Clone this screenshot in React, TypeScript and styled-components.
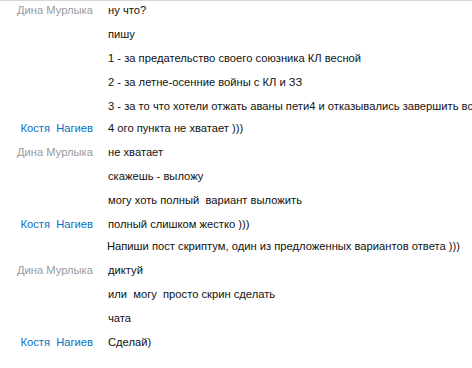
import styled, { createGlobalStyle } from 'styled-components'

type Msg = { from?: 'dina' | 'kostya'; text: string; tight?: boolean; nudge?: boolean }

const names = {
  dina: 'Дина Мурлыка',
  kostya: 'Костя\u00a0 Нагиев',
}

const messages: Msg[] = [
  { from: 'dina', text: 'ну что?' },
  { text: 'пишу' },
  { text: '1 - за предательство своего союзника КЛ весной' },
  { text: '2 - за летне-осенние войны с КЛ и ЗЗ' },
  { text: '3 - за то что хотели отжать аваны пети4 и отказывались завершить всё' },
  { from: 'kostya', text: '4 ого пункта не хватает )))', tight: true },
  { from: 'dina', text: 'не хватает' },
  { text: 'скажешь - выложу' },
  { text: 'могу хоть полный  вариант выложить' },
  { from: 'kostya', text: 'полный слишком жестко )))' },
  { text: 'Напиши пост скриптум, один из предложенных вариантов ответа )))', tight: true, nudge: true },
  { from: 'dina', text: 'диктуй' },
  { text: 'или  могу  просто скрин сделать' },
  { text: 'чата' },
  { from: 'kostya', text: 'Сделай)' },
]

export default function App() {
  return (
    <>
      <GlobalStyle />
      <Log>
        {messages.map((m, i) => (
          <Row key={i} $tight={m.tight}>
            <Author $who={m.from}>{m.from ? names[m.from] : ''}</Author>
            <Text $nudge={m.nudge}>{m.text}</Text>
          </Row>
        ))}
      </Log>
    </>
  )
}

const GlobalStyle = createGlobalStyle`
  body {
    margin: 0;
    background: #fff;
    font-family: "Liberation Sans", Arial, sans-serif;
    font-size: 11.2px;
  }
`

const Log = styled.div`
  border-top: 1px solid #d8d8d8;
  width: 472px;
  height: 367px;
  overflow: hidden;
`

const Row = styled.div<{ $tight?: boolean }>`
  display: grid;
  grid-template-columns: 93px 1fr;
  column-gap: 15px;
  height: 24px;
  margin-top: ${p => (p.$tight ? '-2px' : '0')};
  line-height: 18px;
  white-space: pre;
`

const Author = styled.div<{ $who?: 'dina' | 'kostya' }>`
  text-align: right;
  color: ${p => (p.$who === 'kostya' ? '#0a6fc0' : '#9a9a9a')};
`

const Text = styled.div<{ $nudge?: boolean }>`
  color: #111;
  overflow: hidden;
  margin-left: ${p => (p.$nudge ? '-1px' : '0')};
`
